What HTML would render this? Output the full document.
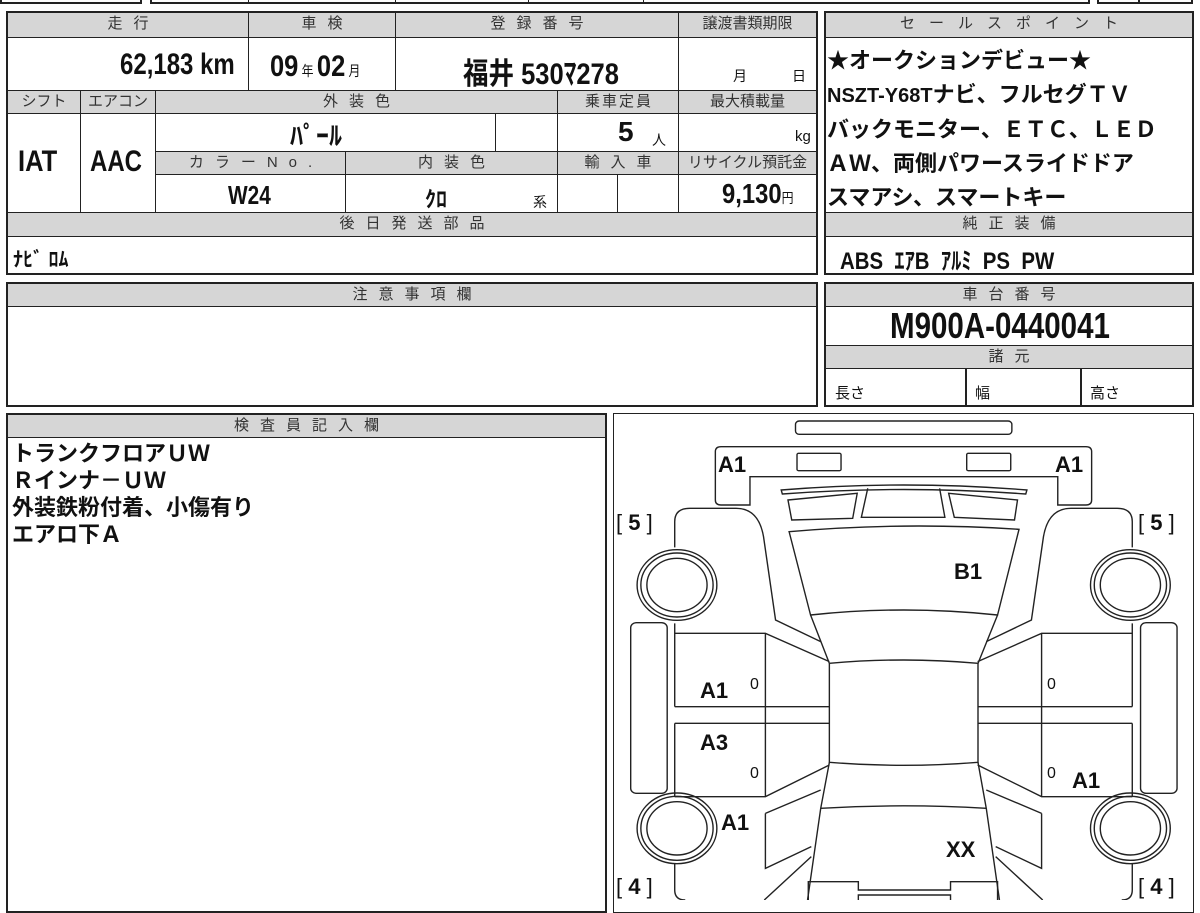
<!DOCTYPE html>
<html><head><meta charset="utf-8"><style>
*{margin:0;padding:0;box-sizing:border-box}
body{width:1200px;height:900px;background:#fff;position:relative;overflow:hidden;font-family:"Liberation Sans","Noto Sans CJK JP",sans-serif;color:#111}
.c{position:absolute;border:1px solid #222}
.o{position:absolute;border:2px solid #222}
.h{position:absolute;background:#d6d6d6;border:1px solid #222;font-size:15px;color:#333;text-align:center;letter-spacing:11px;text-indent:11px;line-height:22px}
.t{position:absolute;white-space:nowrap}
.b{font-weight:bold}
.n{font-family:"Liberation Sans Narrow","Liberation Sans","Noto Sans CJK JP",sans-serif;font-weight:bold}
.lab{position:absolute;font-family:"Liberation Sans","Noto Sans CJK JP",sans-serif;font-weight:bold;font-size:22px;white-space:nowrap}
</style></head><body>
<!-- top cut row -->
<div class="c" style="left:0;top:-10px;width:142px;height:14px;border-width:2px"></div>
<div class="c" style="left:150px;top:-10px;width:940px;height:14px;border-width:2px"></div>
<div class="c" style="left:248px;top:-10px;width:148px;height:14px"></div>
<div class="c" style="left:528px;top:-10px;width:116px;height:14px"></div>
<div class="c" style="left:1097px;top:-10px;width:96px;height:14px;border-width:2px"></div>
<div class="c" style="left:1138px;top:-10px;width:1px;height:14px"></div>

<!-- top main table -->
<div class="o" style="left:6px;top:11px;width:812px;height:264px"></div>
<div class="h" style="left:7px;top:12px;width:242px;height:26px">走行</div>
<div class="h" style="left:248px;top:12px;width:148px;height:26px">車検</div>
<div class="h" style="left:395px;top:12px;width:284px;height:26px">登録番号</div>
<div class="h" style="left:678px;top:12px;width:139px;height:26px;letter-spacing:0;text-indent:0">譲渡書類期限</div>
<div class="c" style="left:7px;top:37px;width:242px;height:54px"></div>
<div class="c" style="left:248px;top:37px;width:148px;height:54px"></div>
<div class="c" style="left:395px;top:37px;width:284px;height:54px"></div>
<div class="c" style="left:678px;top:37px;width:139px;height:54px"></div>
<div class="t n" style="left:120px;top:48px;font-size:30px;transform:scaleX(.8);transform-origin:left">62,183 km</div>
<div class="t n" style="left:270px;top:50px;font-size:30px;transform:scaleX(.85);transform-origin:left">09<span style="font-size:14px;font-weight:normal"> 年 </span>02<span style="font-size:14px;font-weight:normal"> 月</span></div>
<div class="t n" style="left:463px;top:49px;font-size:30px;transform:scaleX(.85);transform-origin:left">福井 530ﾏ278</div>
<div class="t" style="left:733px;top:66px;font-size:14px">月</div>
<div class="t" style="left:792px;top:66px;font-size:14px">日</div>

<div class="h" style="left:7px;top:90px;width:74px;height:24px;letter-spacing:0;text-indent:0">シフト</div>
<div class="h" style="left:80px;top:90px;width:76px;height:24px;letter-spacing:0;text-indent:0">エアコン</div>
<div class="h" style="left:155px;top:90px;width:403px;height:24px">外装色</div>
<div class="h" style="left:557px;top:90px;width:122px;height:24px;letter-spacing:2px;text-indent:2px">乗車定員</div>
<div class="h" style="left:678px;top:90px;width:139px;height:24px;letter-spacing:0;text-indent:0">最大積載量</div>
<div class="c" style="left:7px;top:113px;width:74px;height:100px"></div>
<div class="c" style="left:80px;top:113px;width:76px;height:100px"></div>
<div class="t n" style="left:18px;top:145px;font-size:30px;transform:scaleX(.85);transform-origin:left">IAT</div>
<div class="t n" style="left:90px;top:145px;font-size:30px;transform:scaleX(.8);transform-origin:left">AAC</div>
<div class="c" style="left:155px;top:113px;width:341px;height:39px"></div>
<div class="c" style="left:495px;top:113px;width:63px;height:39px"></div>
<div class="c" style="left:557px;top:113px;width:122px;height:39px"></div>
<div class="c" style="left:678px;top:113px;width:139px;height:39px"></div>
<div class="t n" style="left:290px;top:116px;font-size:26px">ﾊﾟｰﾙ</div>
<div class="t n" style="left:618px;top:116px;font-size:28px">5</div>
<div class="t" style="left:652px;top:130px;font-size:14px">人</div>
<div class="t" style="left:795px;top:128px;font-size:15px">kg</div>
<div class="h" style="left:155px;top:151px;width:191px;height:24px">カラーNo.</div>
<div class="h" style="left:345px;top:151px;width:213px;height:24px">内装色</div>
<div class="h" style="left:557px;top:151px;width:122px;height:24px">輸入車</div>
<div class="h" style="left:678px;top:151px;width:139px;height:24px;letter-spacing:0;text-indent:0">リサイクル預託金</div>
<div class="c" style="left:155px;top:174px;width:191px;height:39px"></div>
<div class="c" style="left:345px;top:174px;width:213px;height:39px"></div>
<div class="c" style="left:557px;top:174px;width:61px;height:39px"></div>
<div class="c" style="left:617px;top:174px;width:62px;height:39px"></div>
<div class="c" style="left:678px;top:174px;width:139px;height:39px"></div>
<div class="t n" style="left:228px;top:180px;font-size:26px;transform:scaleX(.8);transform-origin:left">W24</div>
<div class="t n" style="left:425px;top:182px;font-size:22px">ｸﾛ</div>
<div class="t" style="left:533px;top:192px;font-size:14px">系</div>
<div class="t n" style="left:722px;top:178px;font-size:28px;transform:scaleX(.85);transform-origin:left">9,130<span style="font-size:14px;font-weight:normal">円</span></div>
<div class="h" style="left:7px;top:212px;width:810px;height:25px">後日発送部品</div>
<div class="t n" style="left:13px;top:243px;font-size:20px">ﾅﾋﾞ ﾛﾑ</div>

<!-- sales point -->
<div class="o" style="left:824px;top:11px;width:370px;height:264px"></div>
<div class="h" style="left:825px;top:12px;width:368px;height:26px;letter-spacing:14px;text-indent:14px">セールスポイント</div>
<div class="t b" style="left:827px;top:44px;font-size:22px;line-height:34px">★オークションデビュー★<br><span class="n" style="font-size:20px">NSZT-Y68T</span>ナビ、フルセグＴＶ<br>バックモニター、ＥＴＣ、ＬＥＤ<br>ＡＷ、両側パワースライドドア<br>スマアシ、スマートキー</div>
<div class="h" style="left:825px;top:212px;width:368px;height:25px">純正装備</div>
<div class="t n" style="left:840px;top:241px;font-size:24px;transform:scaleX(.85);transform-origin:left">ABS&nbsp; ｴｱB&nbsp; ｱﾙﾐ&nbsp; PS&nbsp; PW</div>

<!-- 注意事項欄 -->
<div class="o" style="left:6px;top:282px;width:812px;height:125px"></div>
<div class="h" style="left:7px;top:283px;width:810px;height:24px">注意事項欄</div>

<!-- 車台番号 -->
<div class="o" style="left:824px;top:282px;width:370px;height:125px"></div>
<div class="h" style="left:825px;top:283px;width:368px;height:24px">車台番号</div>
<div class="t n" style="left:890px;top:305px;font-size:36px;transform:scaleX(.82);transform-origin:left">M900A-0440041</div>
<div class="h" style="left:825px;top:345px;width:368px;height:24px">諸元</div>
<div class="c" style="left:965px;top:368px;width:1px;height:38px"></div>
<div class="c" style="left:1080px;top:368px;width:1px;height:38px"></div>
<div class="t" style="left:835px;top:382px;font-size:15px">長さ</div>
<div class="t" style="left:975px;top:382px;font-size:15px">幅</div>
<div class="t" style="left:1090px;top:382px;font-size:15px">高さ</div>

<!-- 検査員記入欄 -->
<div class="o" style="left:6px;top:413px;width:601px;height:500px"></div>
<div class="h" style="left:7px;top:414px;width:599px;height:24px">検査員記入欄</div>
<div class="t b" style="left:12px;top:440px;font-size:22px;line-height:27px">トランクフロアＵＷ<br>Ｒインナ－ＵＷ<br>外装鉄粉付着、小傷有り<br>エアロ下Ａ</div>

<!-- diagram -->
<div class="o" style="left:613px;top:413px;width:581px;height:500px;border-width:1px"></div>
<svg style="position:absolute;left:610px;top:410px" width="590" height="490" viewBox="0 0 1568 1470" preserveAspectRatio="none">
<g fill="none" stroke="#222" stroke-width="1.4">
<rect x="493" y="33" width="575" height="40" rx="10" vector-effect="non-scaling-stroke"/>
<path d="M295 110 H1265 Q1280 110 1280 125 V270 Q1280 285 1265 285 H1190 V200 H372 V285 H295 Q280 285 280 270 V125 Q280 110 295 110 Z" vector-effect="non-scaling-stroke"/>
<rect x="497" y="130" width="117" height="52" rx="4" vector-effect="non-scaling-stroke"/>
<rect x="948" y="130" width="117" height="52" rx="4" vector-effect="non-scaling-stroke"/>
<path d="M455 240 Q780 210 1108 240 L1105 252 Q780 225 458 252 Z" vector-effect="non-scaling-stroke"/>
<path d="M473 270 L657 250 L645 325 L483 330 Z" vector-effect="non-scaling-stroke"/>
<path d="M685 235 L668 322 L890 322 L876 235" vector-effect="non-scaling-stroke"/>
<path d="M900 250 L1083 270 L1075 330 L915 322 Z" vector-effect="non-scaling-stroke"/>
<path d="M476 365 Q780 335 1087 358 L1030 615 Q780 585 533 615 Z" vector-effect="non-scaling-stroke"/>
<path d="M533 615 L583 760 M1030 615 L978 760" vector-effect="non-scaling-stroke"/>
<path d="M583 760 Q780 740 978 760 V1057 Q780 1075 583 1057 Z" vector-effect="non-scaling-stroke"/>
<path d="M583 1057 L560 1195 L525 1470 M978 1057 L1000 1195 L1035 1470 M560 1195 Q780 1180 1000 1195" vector-effect="non-scaling-stroke"/>
<path d="M172 412 V335 Q172 295 212 295 H335 Q395 295 408 380 L440 630 L560 695" vector-effect="non-scaling-stroke"/>
<path d="M172 640 V670 H413 L583 755 M172 890 H583 M172 940 H583 M172 1160 H413 L583 1065 M413 670 V1160 M172 670 V890 M172 940 V1160" vector-effect="non-scaling-stroke"/>
<path d="M413 1210 L560 1140 M413 1210 V1375 L535 1310 M172 1360 V1440 Q172 1470 200 1470 M410 1470 L535 1340" vector-effect="non-scaling-stroke"/>
<path d="M1388 412 V335 Q1388 295 1348 295 H1225 Q1165 295 1152 380 L1120 630 L1000 695" vector-effect="non-scaling-stroke"/>
<path d="M1388 640 V670 H1147 L977 755 M1388 890 H977 M1388 940 H977 M1388 1160 H1147 L977 1065 M1147 670 V1160 M1388 670 V890 M1388 940 V1160" vector-effect="non-scaling-stroke"/>
<path d="M1147 1210 L1000 1140 M1147 1210 V1375 L1025 1310 M1388 1360 V1440 Q1388 1470 1360 1470 M1150 1470 L1025 1340" vector-effect="non-scaling-stroke"/>
<rect x="55" y="638" width="97" height="512" rx="15" vector-effect="non-scaling-stroke"/>
<rect x="1410" y="638" width="97" height="512" rx="15" vector-effect="non-scaling-stroke"/>
<path d="M527 1470 V1415 H660 V1440 H905 V1415 H1030 V1470 M660 1470 V1455 H905 V1470" vector-effect="non-scaling-stroke"/>
<ellipse cx="178" cy="525" rx="106" ry="106" vector-effect="non-scaling-stroke"/><ellipse cx="178" cy="525" rx="96" ry="96" vector-effect="non-scaling-stroke"/><ellipse cx="178" cy="525" rx="80" ry="80" vector-effect="non-scaling-stroke"/>
<ellipse cx="1383" cy="525" rx="106" ry="106" vector-effect="non-scaling-stroke"/><ellipse cx="1383" cy="525" rx="96" ry="96" vector-effect="non-scaling-stroke"/><ellipse cx="1383" cy="525" rx="80" ry="80" vector-effect="non-scaling-stroke"/>
<ellipse cx="178" cy="1255" rx="106" ry="106" vector-effect="non-scaling-stroke"/><ellipse cx="178" cy="1255" rx="96" ry="96" vector-effect="non-scaling-stroke"/><ellipse cx="178" cy="1255" rx="80" ry="80" vector-effect="non-scaling-stroke"/>
<ellipse cx="1383" cy="1255" rx="106" ry="106" vector-effect="non-scaling-stroke"/><ellipse cx="1383" cy="1255" rx="96" ry="96" vector-effect="non-scaling-stroke"/><ellipse cx="1383" cy="1255" rx="80" ry="80" vector-effect="non-scaling-stroke"/>
</g>
</svg>
<div class="lab" style="left:718px;top:452px">A1</div>
<div class="lab" style="left:1055px;top:452px">A1</div>
<div class="lab" style="left:616px;top:510px;font-weight:normal">[ <b>5</b> ]</div>
<div class="lab" style="left:1138px;top:510px;font-weight:normal">[ <b>5</b> ]</div>
<div class="lab" style="left:954px;top:559px">B1</div>
<div class="lab" style="left:700px;top:678px">A1</div>
<div class="lab" style="left:750px;top:676px;font-size:16px;font-weight:normal">0</div>
<div class="lab" style="left:1047px;top:676px;font-size:16px;font-weight:normal">0</div>
<div class="lab" style="left:700px;top:730px">A3</div>
<div class="lab" style="left:750px;top:765px;font-size:16px;font-weight:normal">0</div>
<div class="lab" style="left:1047px;top:765px;font-size:16px;font-weight:normal">0</div>
<div class="lab" style="left:1072px;top:768px">A1</div>
<div class="lab" style="left:721px;top:810px">A1</div>
<div class="lab" style="left:946px;top:837px">XX</div>
<div class="lab" style="left:616px;top:874px;font-weight:normal">[ <b>4</b> ]</div>
<div class="lab" style="left:1138px;top:874px;font-weight:normal">[ <b>4</b> ]</div>
</body></html>
